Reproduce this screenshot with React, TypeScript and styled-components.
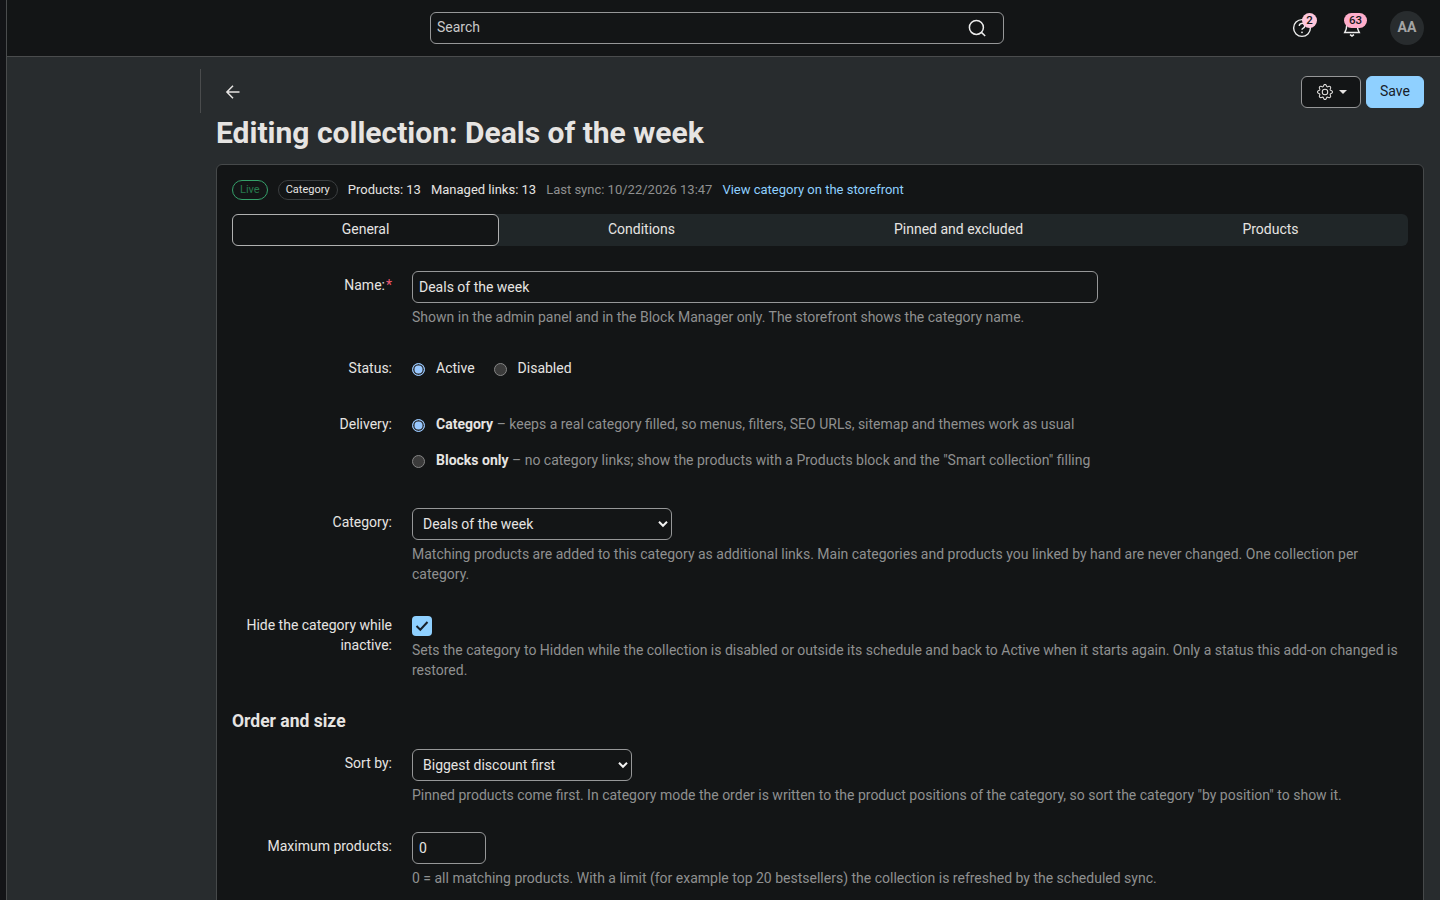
import React from "react";
import styled, { createGlobalStyle } from "styled-components";
import { BsGear } from "react-icons/bs";

const GlobalStyle = createGlobalStyle`
  * { box-sizing: border-box; }
  body {
    margin: 0;
    background: #282c2e;
    color: #e6e4e2;
    font: 14px/20px Roboto, "Liberation Sans", sans-serif;
    overflow: hidden;
  }
  button, input, select { font: inherit; color: inherit; margin: 0; }
  svg { display: block; flex: none; }
`;

const Shell = styled.div`
  display: flex;
  height: 900px;
  overflow: hidden;
`;

const Rail = styled.div`
  flex: none;
  width: 7px;
  background: #131417;
  border-right: 1px solid #4a4c4d;
`;

const Main = styled.div`
  flex: 1;
  min-width: 0;
`;

const Header = styled.header`
  display: flex;
  align-items: center;
  height: 57px;
  padding: 0 16px 1px 423px;
  background: #131516;
  border-bottom: 1px solid #4a4c4d;
`;

const SearchBox = styled.div`
  display: flex;
  align-items: center;
  justify-content: space-between;
  width: 574px;
  height: 32px;
  margin-right: auto;
  padding: 0 16px 0 6px;
  border: 1px solid #969798;
  border-radius: 6px;
  color: #c9c9c9;
`;

const SearchLabel = styled.span`
  height: 22px;
`;

const HeaderIcon = styled.div`
  position: relative;
  width: 20px;
  height: 20px;
  margin-right: 30px;
  color: #ececec;
`;

const Count = styled.span<{ $left: number; $width: number; $soft?: boolean }>`
  position: absolute;
  top: -5px;
  left: ${(p) => p.$left}px;
  width: ${(p) => p.$width}px;
  height: 15px;
  border-radius: 8px;
  background: ${(p) => (p.$soft ? "#ffc7dc" : "#ffaecb")};
  color: #17181a;
  font-size: 11.5px;
  font-weight: 500;
  line-height: ${(p) => (p.$soft ? 14 : 15)}px;
  text-align: center;
`;

const Avatar = styled.div`
  width: 34px;
  height: 34px;
  margin-left: -2px;
  border-radius: 50%;
  background: #282c2e;
  color: #a3a4a4;
  font-weight: 700;
  line-height: 33px;
  text-align: center;
`;

const Body = styled.div`
  display: flex;
`;

const SideColumn = styled.div`
  flex: none;
  width: 194px;
  height: 44px;
  margin-top: 12px;
  border-right: 1px solid #4a4c4d;
`;

const Content = styled.main`
  flex: 1;
  padding: 0 16px 0 15px;
`;

const Actions = styled.div`
  display: flex;
  align-items: center;
  gap: 5px;
  padding-top: 19px;
`;

const Back = styled.a`
  margin: 0 auto 0 9px;
`;

const Button = styled.button<{ $primary?: boolean }>`
  display: flex;
  align-items: center;
  justify-content: center;
  gap: 6px;
  width: ${(p) => (p.$primary ? 58 : 60)}px;
  height: 32px;
  padding: ${(p) => (p.$primary ? "0 0 2px" : "0 0 0 2px")};
  border: 1px solid ${(p) => (p.$primary ? "#8fd0ff" : "#969798")};
  border-radius: 6px;
  background: ${(p) => (p.$primary ? "#8fd0ff" : "#131516")};
  color: ${(p) => (p.$primary ? "#17202a" : "#e6e4e2")};
`;

const Title = styled.h1`
  margin: 5px 0 11px;
  font-size: 30px;
  font-weight: 700;
  line-height: 40px;
  white-space: nowrap;
`;

const Card = styled.section`
  height: 760px;
  padding: 15px;
  border: 1px solid #46494a;
  border-radius: 6px;
  background: #131516;
`;

const Summary = styled.div`
  display: flex;
  align-items: center;
  gap: 10px;
  height: 20px;
  font-size: 13px;
`;

const Pill = styled.span<{ $live?: boolean }>`
  height: 20px;
  padding: 0 7px;
  border: 1px solid ${(p) => (p.$live ? "#35a06a" : "#3b3e40")};
  border-radius: 10px;
  color: ${(p) => (p.$live ? "#277a4d" : "#e6e4e2")};
  font-size: 11px;
  line-height: 17px;
`;

const Muted = styled.span`
  color: #8f9090;
`;

const StoreLink = styled.a`
  color: #8fd0ff;
`;

const Tabs = styled.nav`
  display: flex;
  height: 32px;
  margin: 14px 0 25px;
  border-radius: 6px;
  background: #202628;
`;

const Tab = styled.div<{ $width: number; $active?: boolean }>`
  width: ${(p) => p.$width}px;
  border: 1px solid ${(p) => (p.$active ? "#b0b0b0" : "transparent")};
  border-radius: 6px;
  background: ${(p) => (p.$active ? "#131516" : "transparent")};
  line-height: 28px;
  text-align: center;
`;

const Form = styled.form`
  display: flex;
  flex-direction: column;
  gap: 27px;
`;

const Row = styled.div<{ $height?: number }>`
  display: flex;
  gap: 20px;
  min-height: ${(p) => p.$height ?? 0}px;
`;

const Label = styled.label`
  flex: none;
  width: 160px;
  padding-top: 4px;
  text-align: right;
`;

const Required = styled.span`
  margin-left: 1px;
  color: #ef5a74;
`;

const Control = styled.div`
  flex: 1;
  min-width: 0;
`;

const Input = styled.input<{ $width: number }>`
  display: block;
  width: ${(p) => p.$width}px;
  height: 32px;
  padding: 0 6px;
  border: 1px solid #969798;
  border-radius: 6px;
  background: #131516;
`;

const SelectBox = styled.div<{ $width: number }>`
  display: flex;
  align-items: center;
  justify-content: space-between;
  width: ${(p) => p.$width}px;
  height: 32px;
  padding: 0 3px 0 10px;
  border: 1px solid #969798;
  border-radius: 6px;
`;

const Help = styled.p`
  margin: 4px 0 0;
  color: #8f9090;
`;

const Options = styled.div<{ $column?: boolean }>`
  display: flex;
  flex-direction: ${(p) => (p.$column ? "column" : "row")};
  align-items: flex-start;
  gap: ${(p) => (p.$column ? 16 : 19)}px;
  padding-top: 4px;
`;

const Option = styled.label`
  display: flex;
  align-items: center;
  gap: 11px;
`;

const Radio = styled.span<{ $on?: boolean }>`
  width: 13px;
  height: 13px;
  margin-top: 3px;
  border: 1px solid ${(p) => (p.$on ? "#99c8ff" : "#858585")};
  border-radius: 50%;
  background: ${(p) => (p.$on ? "#99c8ff" : "#3b3b3b")};
  box-shadow: ${(p) => (p.$on ? "inset 0 0 0 1.5px #30343a" : "none")};
`;

const Check = styled.span`
  display: flex;
  align-items: center;
  justify-content: center;
  width: 20px;
  height: 20px;
  margin-top: 5px;
  border-radius: 4px;
  background: #8fd0ff;
`;

const Subheading = styled.h2`
  margin: 0 0 -11px;
  padding-top: 3px;
  font-size: 17.5px;
  font-weight: 700;
  line-height: 23px;
`;

const Chevron = () => (
  <svg width="10" height="8" viewBox="0 0 10 8" fill="none" stroke="#f2f2f2" strokeWidth="2">
    <path d="M1 1.8 5 5.8 9 1.8" />
  </svg>
);

const tabs = [
  { name: "General", width: 267 },
  { name: "Conditions", width: 285 },
  { name: "Pinned and excluded", width: 349 },
  { name: "Products", width: 275 },
];

export default function App() {
  return (
    <>
      <GlobalStyle />
      <Shell>
        <Rail />
        <Main>
          <Header>
            <SearchBox>
              <SearchLabel>Search</SearchLabel>
              <svg width="20" height="20" viewBox="0 0 20 20" fill="none" stroke="#ececec" strokeWidth="1.5">
                <circle cx="9.4" cy="9.4" r="7" />
                <path d="m14.4 14.4 3.8 3.6" />
              </svg>
            </SearchBox>
            <HeaderIcon>
              <svg width="20" height="20" viewBox="0 0 20 20" fill="none" stroke="currentColor" strokeWidth="1.4">
                <circle cx="10" cy="10" r="8.4" />
                <path d="M7.3 8a2.7 2.5 0 1 1 4 2.1c-.9.5-1.3.9-1.3 1.7" />
                <circle cx="10" cy="14.3" r=".9" fill="currentColor" stroke="none" />
              </svg>
              <Count $left={10} $width={15} $soft>2</Count>
            </HeaderIcon>
            <HeaderIcon>
              <svg width="20" height="20" viewBox="0 0 20 20" fill="none" stroke="currentColor" strokeWidth="1.5">
                <path d="M10 2.2c-3.2 0-5.3 2.3-5.3 5.3 0 3.3-.6 4.7-1.9 6.9h14.4c-1.3-2.2-1.9-3.6-1.9-6.9 0-3-2.1-5.300-5.300-5.300Z" />
                <path d="m8 16.700 2 1.300 2-1.300" />
              </svg>
              <Count $left={2} $width={23}>63</Count>
            </HeaderIcon>
            <Avatar>AA</Avatar>
          </Header>
          <Body>
            <SideColumn />
            <Content>
              <Actions>
                <Back>
                  <svg width="16" height="16" viewBox="0 0 16 16" fill="none" stroke="#e6e4e2" strokeWidth="1.5">
                    <path d="M14.500 8H2M8 1.800 1.900 8 8 14.200" />
                  </svg>
                </Back>
                <Button type="button">
                  <BsGear size={16} />
                  <svg width="8" height="4" viewBox="0 0 8 4" fill="#e6e4e2">
                    <path d="M0 0h8L4 4Z" />
                  </svg>
                </Button>
                <Button type="button" $primary>Save</Button>
              </Actions>
              <Title>Editing collection: Deals of the week</Title>
              <Card>
                <Summary>
                  <Pill $live>Live</Pill>
                  <Pill>Category</Pill>
                  <span>Products: 13</span>
                  <span>Managed links: 13</span>
                  <Muted>Last sync: 10/22/2026 13:47</Muted>
                  <StoreLink>View category on the storefront</StoreLink>
                </Summary>
                <Tabs>
                  {tabs.map((tab, i) => (
                    <Tab key={tab.name} $width={tab.width} $active={i === 0}>{tab.name}</Tab>
                  ))}
                </Tabs>
                <Form>
                  <Row>
                    <Label>Name:<Required>*</Required></Label>
                    <Control>
                      <Input $width={686} defaultValue="Deals of the week" />
                      <Help>Shown in the admin panel and in the Block Manager only. The storefront shows the category name.</Help>
                    </Control>
                  </Row>
                  <Row $height={29}>
                    <Label>Status:</Label>
                    <Options>
                      <Option><Radio $on />Active</Option>
                      <Option><Radio />Disabled</Option>
                    </Options>
                  </Row>
                  <Row $height={71}>
                    <Label>Delivery:</Label>
                    <Options $column>
                      <Option>
                        <Radio $on />
                        <span><b>Category</b> <Muted>– keeps a real category filled, so menus, filters, SEO URLs, sitemap and themes work as usual</Muted></span>
                      </Option>
                      <Option>
                        <Radio />
                        <span><b>Blocks only</b> <Muted>– no category links; show the products with a Products block and the "Smart collection" filling</Muted></span>
                      </Option>
                    </Options>
                  </Row>
                  <Row>
                    <Label>Category:</Label>
                    <Control>
                      <SelectBox $width={260}>Deals of the week<Chevron /></SelectBox>
                      <Help>Matching products are added to this category as additional links. Main categories and products you linked by hand are never changed. One collection per category.</Help>
                    </Control>
                  </Row>
                  <Row>
                    <Label>Hide the category while inactive:</Label>
                    <Control>
                      <Check>
                        <svg width="14" height="12" viewBox="0 0 14 12" fill="none" stroke="#17202a" strokeWidth="2">
                          <path d="m1.500 6 3.800 3.700L12.500 2" />
                        </svg>
                      </Check>
                      <Help>Sets the category to Hidden while the collection is disabled or outside its schedule and back to Active when it starts again. Only a status this add-on changed is restored.</Help>
                    </Control>
                  </Row>
                  <Subheading>Order and size</Subheading>
                  <Row>
                    <Label>Sort by:</Label>
                    <Control>
                      <SelectBox $width={220}>Biggest discount first<Chevron /></SelectBox>
                      <Help>Pinned products come first. In category mode the order is written to the product positions of the category, so sort the category "by position" to show it.</Help>
                    </Control>
                  </Row>
                  <Row>
                    <Label>Maximum products:</Label>
                    <Control>
                      <Input $width={74} defaultValue="0" />
                      <Help>0 = all matching products. With a limit (for example top 20 bestsellers) the collection is refreshed by the scheduled sync.</Help>
                    </Control>
                  </Row>
                </Form>
              </Card>
            </Content>
          </Body>
        </Main>
      </Shell>
    </>
  );
}
